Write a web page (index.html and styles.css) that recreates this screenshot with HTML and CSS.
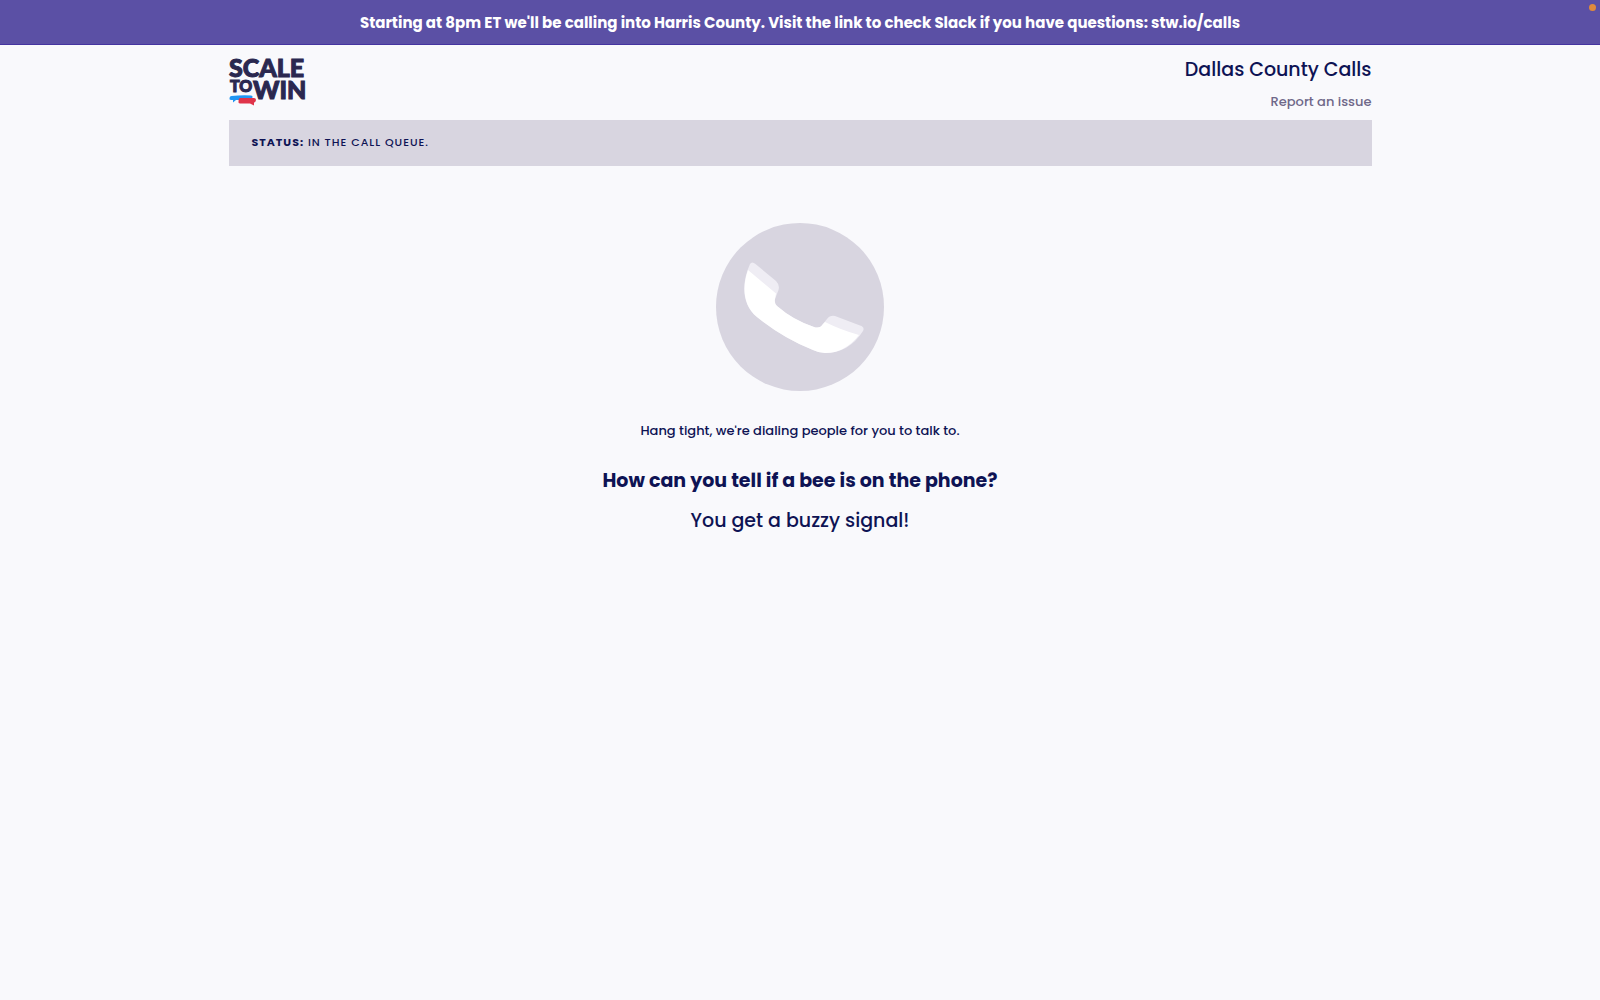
FILE: index.html
```
<!DOCTYPE html>
<html lang="en">
<head>
    <meta charset="UTF-8">
    <meta name="viewport" content="width=device-width, initial-scale=1.0">
    <title>Dallas County Calls</title>
    <link rel="stylesheet" href="styles.css">
</head>
<body>

<div class="banner">
    Starting at 8pm ET we'll be calling into Harris County. Visit the link to check Slack if you have questions: stw.io/calls
    <span class="indicator"></span>
</div>

<div class="container">
    <header class="header">
        <!-- Logo -->
        <svg class="logo" width="78" height="50" viewBox="0 0 78 50" role="img" aria-label="Scale to Win">
            <text class="logo-large" x="0" y="19">SCALE</text>
            <text class="logo-small" x="1" y="34">TO</text>
            <text class="logo-large" x="24" y="41">WIN</text>
            <path fill="#2196f3" d="M2.500 38q10-1 19.500-.5 2 .2 1.500 1.700l-.5 1.300q-.5 1.500-2 1.500H7l-3 2.500v-2.500H2q-2 0-1.500-2 .3-1.800 2-2z"/>
            <path fill="#e0344a" d="M11 40h14q2 0 2 2l-.5 1.500q-.5 1-1.500 1v3l-4-2H11q-2 0-1.500-2l.2-2q.3-1.500 1.300-1.500z"/>
        </svg>
        <div class="campaign">
            <h1>Dallas County Calls</h1>
            <a href="#">Report an issue</a>
        </div>
    </header>

    <div class="status"><strong>Status:</strong> In the call queue.</div>

    <main class="waiting">
        <svg class="phone" width="168" height="168" viewBox="0 0 168 168" aria-hidden="true">
            <circle cx="84" cy="84" r="84" fill="#d8d5e0"/>
            <path fill="#efedf4" d="M34 41Q36 38 39.500 41L60 58Q64 62 62.500 67L59 76Q58 80 61 83Q77 97 98 104Q104 106 107 101L111 96Q114 92 119 93L144 102.500Q149 104 147 108Q133 130 109 130Q103 130 97 127Q67 115 41 94C26 82 25 61 34 41z"/>
            <path fill="#fff" d="M32 47L60 70.500L59 76Q58 80 61 83Q77 97 98 104Q104 106 107 101L109 99Q125 107 143 112Q129 130 109 130Q103 130 97 127Q67 115 41 94C27 82 26 64 32 47z"/>
        </svg>
        <p class="message">Hang tight, we're dialing people for you to talk to.</p>
        <h2>How can you tell if a bee is on the phone?</h2>
        <p class="answer">You get a buzzy signal!</p>
    </main>
</div>

</body>
</html>
```
FILE: styles.css
```
body {
    margin: 0;
    font-family: Poppins, Inter, sans-serif;
    font-size: 13px;
    font-weight: 500;
    line-height: 20px;
    color: #0e1354;
    background-color: #f9f9fc;
}
h1, h2, p {
    margin: 0;
}
.banner {
    position: relative;
    padding: 11px 20px 9px;
    border-bottom: 1px solid #4534a0;
    background-color: #5b50a5;
    color: #fff;
    font-size: 15px;
    font-weight: 700;
    line-height: 24px;
    text-align: center;
}
.indicator {
    position: absolute;
    top: 4px;
    right: 4px;
    width: 7px;
    height: 7px;
    border-radius: 50%;
    background-color: #e08a3c;
}
.container {
    max-width: 1143px;
    margin: 0 auto;
}
.header {
    display: flex;
    justify-content: space-between;
    padding: 13px 0 8px;
}
.logo {
    overflow: visible;
}
.logo-large, .logo-small {
    font-family: Lato, sans-serif;
    font-weight: 900;
    fill: #2a2850;
    stroke: #2a2850;
    stroke-width: 1px;
}
.logo-large {
    font-size: 25px;
}
.logo-small {
    font-size: 16px;
}
.campaign {
    display: flex;
    flex-direction: column;
    align-items: flex-end;
    gap: 10px;
}
.campaign h1 {
    font-size: 19px;
    font-weight: 500;
    line-height: 24px;
}
.campaign a {
    color: #6f6889;
    text-decoration: none;
}
.status {
    padding: 12px 23px 14px;
    background-color: #d8d5e0;
    font-size: 11px;
    letter-spacing: 1px;
    text-transform: uppercase;
}
.waiting {
    display: flex;
    flex-direction: column;
    align-items: center;
    padding: 57px 20px;
    text-align: center;
}
.message {
    margin-top: 30px;
}
.waiting h2 {
    margin-top: 28px;
    font-size: 19px;
    font-weight: 700;
    line-height: 24px;
}
.answer {
    margin-top: 16px;
    font-size: 19px;
    line-height: 24px;
}
```
